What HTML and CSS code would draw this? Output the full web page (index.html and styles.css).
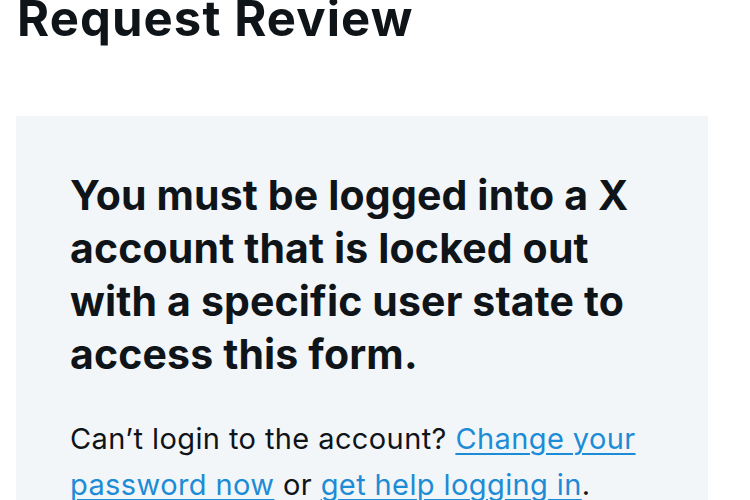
FILE: index.html
```html
<!DOCTYPE html>
<html lang="en">
<head>
<meta charset="utf-8">
<title>Request Review</title>
<link rel="stylesheet" href="styles.css">
</head>
<body>
<main class="page">
  <h1 class="title">Request Review</h1>
  <section class="notice">
    <h2 class="notice-heading">You must be logged into a X account that is locked out with a specific user state to access this form.</h2>
    <p class="notice-text">Can’t login to the account? <a class="link" href="#">Change your password now</a> or <a class="link" href="#">get help logging in</a>.</p>
  </section>
</main>
</body>
</html>
```
FILE: styles.css
```css
html, body {
  margin: 0;
  padding: 0;
  background: #ffffff;
}
body {
  font-family: Inter, "Noto Sans", "Liberation Sans", sans-serif;
  color: #0f1419;
  overflow: hidden;
}
.page {
  padding: 0 42px 0 16px;
}
.title {
  margin: -6px 0 0 1px;
  font-size: 49px;
  line-height: 49px;
  font-weight: 700;
  letter-spacing: 1.1px;
}
.notice {
  margin-top: 73px;
  background: #f3f6f9;
  padding: 53px 50px 54px 54px;
}
.notice-heading {
  margin: 0;
  font-size: 41px;
  line-height: 53px;
  font-weight: 700;
  letter-spacing: 0.15px;
}
.notice-text {
  margin: 35px 0 0;
  font-size: 29px;
  line-height: 46px;
  font-weight: 400;
  letter-spacing: 0.4px;
}
.link {
  color: #1d8cd6;
  text-decoration: underline;
  text-underline-offset: 4px;
  text-decoration-thickness: 2px;
}
```
